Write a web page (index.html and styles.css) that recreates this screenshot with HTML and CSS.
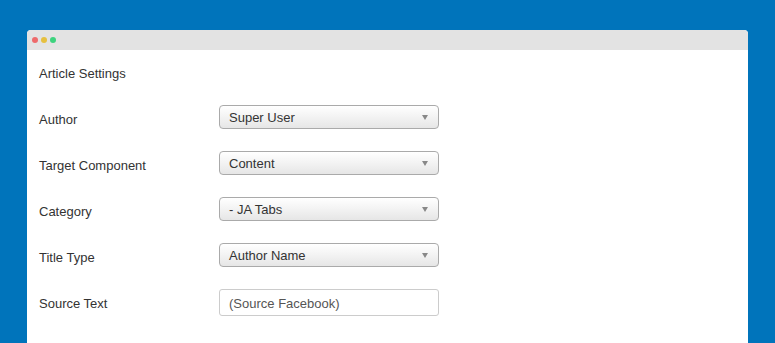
FILE: index.html
```html
<!DOCTYPE html>
<html>
<head>
<meta charset="utf-8">
<link rel="stylesheet" href="styles.css">
</head>
<body>
<div class="window">
  <div class="titlebar">
    <span class="dot red"></span>
    <span class="dot yellow"></span>
    <span class="dot green"></span>
  </div>
  <div class="content">
    <div class="heading">Article Settings</div>
    <div class="row">
      <div class="label">Author</div>
      <div class="select"><span>Super User</span><span class="arrow"></span></div>
    </div>
    <div class="row">
      <div class="label">Target Component</div>
      <div class="select"><span>Content</span><span class="arrow"></span></div>
    </div>
    <div class="row">
      <div class="label">Category</div>
      <div class="select"><span>- JA Tabs</span><span class="arrow"></span></div>
    </div>
    <div class="row">
      <div class="label">Title Type</div>
      <div class="select"><span>Author Name</span><span class="arrow"></span></div>
    </div>
    <div class="row">
      <div class="label">Source Text</div>
      <div class="input">(Source Facebook)</div>
    </div>
  </div>
</div>
</body>
</html>
```

FILE: styles.css
```css
html, body {
  margin: 0;
  padding: 0;
  height: 100%;
  overflow: hidden;
}
body {
  background: #0074bb;
  font-family: "Liberation Sans", Arial, sans-serif;
  font-size: 13px;
  color: #333;
  padding: 30px 0 0 27px;
  box-sizing: border-box;
}
.window {
  width: 721px;
  height: 313px;
  background: #fff;
  border-radius: 4px 4px 0 0;
  overflow: hidden;
}
.titlebar {
  height: 20px;
  background: #e3e3e3;
  display: flex;
  align-items: center;
  gap: 3px;
  padding-left: 5px;
}
.dot {
  width: 6px;
  height: 6px;
  border-radius: 50%;
}
.red { background: #ee6a6b; }
.yellow { background: #e6c03f; }
.green { background: #3dd37e; }
.content {
  padding: 16px 12px 0 12px;
}
.heading {
  line-height: 16px;
  margin-bottom: 23px;
}
.row {
  display: flex;
  align-items: flex-start;
  margin-bottom: 22px;
}
.label {
  width: 180px;
  line-height: 16px;
  padding-top: 7px;
}
.select {
  width: 220px;
  height: 24px;
  box-sizing: border-box;
  border: 1px solid #aaa;
  border-radius: 4px;
  background: linear-gradient(to bottom, #ffffff 0%, #f4f4f4 45%, #e6e6e6 100%);
  display: flex;
  align-items: center;
  justify-content: space-between;
  padding: 2px 10px 0 9px;
  line-height: 16px;
}
.arrow {
  width: 0;
  height: 0;
  margin-top: -2px;
  border-left: 3.5px solid transparent;
  border-right: 3.5px solid transparent;
  border-top: 5px solid #888;
}
.input {
  width: 220px;
  height: 27px;
  box-sizing: border-box;
  border: 1px solid #ccc;
  border-radius: 3px;
  background: #fff;
  color: #555;
  line-height: 16px;
  padding: 6px 9px 0 9px;
}
```
